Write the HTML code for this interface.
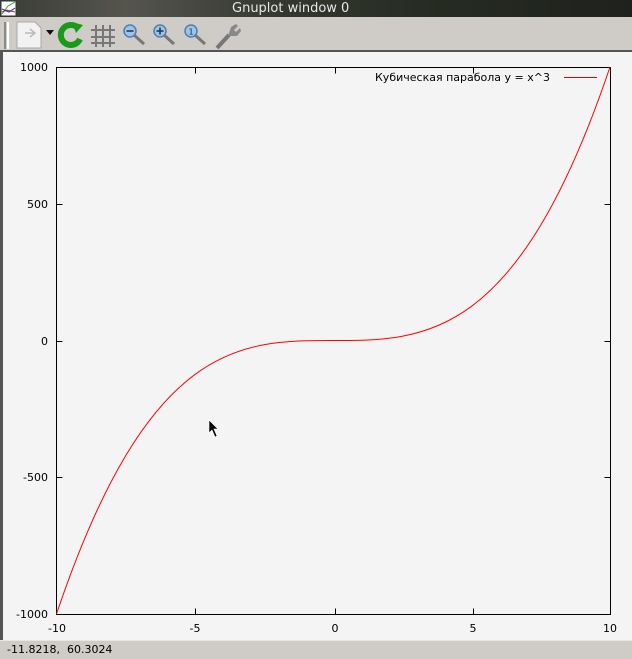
<!DOCTYPE html>
<html><head><meta charset="utf-8"><style>
*{margin:0;padding:0}
body{width:632px;height:658px;overflow:hidden;background:#f4f4f4;position:relative;font-family:"DejaVu Sans","Liberation Sans","Noto Sans CJK SC",sans-serif}
.title{position:absolute;left:0;top:0;width:632px;height:17px;background:linear-gradient(90deg,#3a3c36,#55554e 20%,#33372f 45%,#262b22 70%,#1f211d);}
.title span{position:absolute;left:232px;top:0;font-size:13px;color:#e8e8e8;line-height:17px}
.tb{position:absolute;left:0;top:17px;width:632px;height:33px;background:#cfcbc7}
.tbl{position:absolute;left:0;top:50px;width:632px;height:2px;background:#555}
.lb{position:absolute;left:0;top:52px;width:3px;height:589px;background:#555}
.sb{position:absolute;left:0;top:640px;width:632px;height:18px;background:#cfcbc7;border-top:1px solid #e8e6e3}
.sb span{position:absolute;left:7px;top:2px;font-size:11px;color:#000}
</style></head><body>
<div class="title">
<svg width="17" height="17" style="position:absolute;left:0;top:0"><rect x="1" y="1" width="15" height="15" fill="#fff" stroke="#333"/><path d="M2 14 L8 6 L15 2" stroke="#2a2" fill="none"/><path d="M2 12 L7 10 L15 12" stroke="#c22" fill="none"/><path d="M2 9 L9 12 L15 8" stroke="#22c" fill="none"/></svg>
<span>Gnuplot window 0</span></div>
<div class="tb">
<svg width="260" height="33" style="position:absolute;left:0;top:0">
<rect x="4" y="5" width="2" height="27" fill="#888"/><rect x="7" y="5" width="2" height="27" fill="#fff"/>
<path d="M17 5 H35 L41 11 V31 H17 Z" fill="#f2f2f2" stroke="#aaa"/><path d="M25 16 H34 M30 12 L35 16 L30 20" stroke="#bbb" stroke-width="1.5" fill="none"/>
<path d="M46 13 H54 L50 18 Z" fill="#111"/>
<path d="M78 11 A10 10 0 1 0 80 22" stroke="#1a9a1a" stroke-width="6" fill="none"/><path d="M72 5 L83 8 L76 16 Z" fill="#1a9a1a"/>
<g stroke="#777" stroke-width="2"><path d="M96 8V30M103 8V30M110 8V30M91 13H115M91 20H115M91 26H115"/></g>
<g><circle cx="130" cy="14" r="6" fill="#9cc3e8" stroke="#4c7fb5" stroke-width="1.5"/><path d="M126.5 14H133.5" stroke="#234" stroke-width="1.5"/><path d="M134 18L144 27" stroke="#777" stroke-width="3"/></g>
<g><circle cx="160" cy="14" r="6" fill="#9cc3e8" stroke="#4c7fb5" stroke-width="1.5"/><path d="M156.5 14H163.5M160 10.5V17.5" stroke="#234" stroke-width="1.5"/><path d="M164 18L174 27" stroke="#777" stroke-width="3"/></g>
<g><circle cx="191" cy="14" r="6" fill="#9cc3e8" stroke="#4c7fb5" stroke-width="1.5"/><text x="188.5" y="17.5" font-size="8" fill="#234">1</text><path d="M195 18L205 27" stroke="#777" stroke-width="3"/></g>
<path d="M217 31L229 18" stroke="#777" stroke-width="4"/><path d="M228 19 L231 10 L236 7 L238 9 L234 13 L236 15 L240 11 L241 14 L237 19 Z" fill="#888"/>
</svg></div>
<div class="tbl"></div>
<div class="lb"></div>
<svg width="632" height="588" style="position:absolute;left:0;top:52px" font-family="DejaVu Sans, Liberation Sans, sans-serif" font-size="11">
<g transform="translate(0,-52)">
<rect x="56.5" y="67.5" width="554" height="547" fill="none" stroke="#000"/>
<g stroke="#000">
<path d="M56.5 204.5h6M56.5 341.5h6M56.5 477.5h6M610.5 204.5h-6M610.5 341.5h-6M610.5 477.5h-6"/>
<path d="M195.5 614.5v-6M335.5 614.5v-6M473.5 614.5v-6M195.5 67.5v6M335.5 67.5v6M473.5 67.5v6"/>
</g>
<g text-anchor="end" fill="#000">
<text x="48" y="71">1000</text><text x="48" y="208">500</text><text x="48" y="345">0</text><text x="48" y="481">-500</text><text x="48" y="618">-1000</text>
</g>
<g text-anchor="middle" fill="#000">
<text x="57" y="632">-10</text><text x="195" y="632">-5</text><text x="335" y="632">0</text><text x="473" y="632">5</text><text x="610" y="632">10</text>
</g>
<text x="375" y="81" fill="#000" font-family="DejaVu Sans, Noto Sans CJK SC, sans-serif">Кубическая парабола y = x^3</text>
<path d="M564 77.5H597" stroke="#e00" stroke-width="1"/>
<path d="M56.5 614 C240.67 67 425.33 614 610 67" stroke="#f00" fill="none" stroke-width="1"/>
<path d="M209 420 V433 L212 430 L215 437 L217 436 L214 429 L218 429 Z" fill="#000" stroke="#fff" stroke-width="0.6"/>
</g></svg>
<div class="sb"><span>-11.8218,&nbsp;&nbsp;60.3024</span></div>
</body></html>
